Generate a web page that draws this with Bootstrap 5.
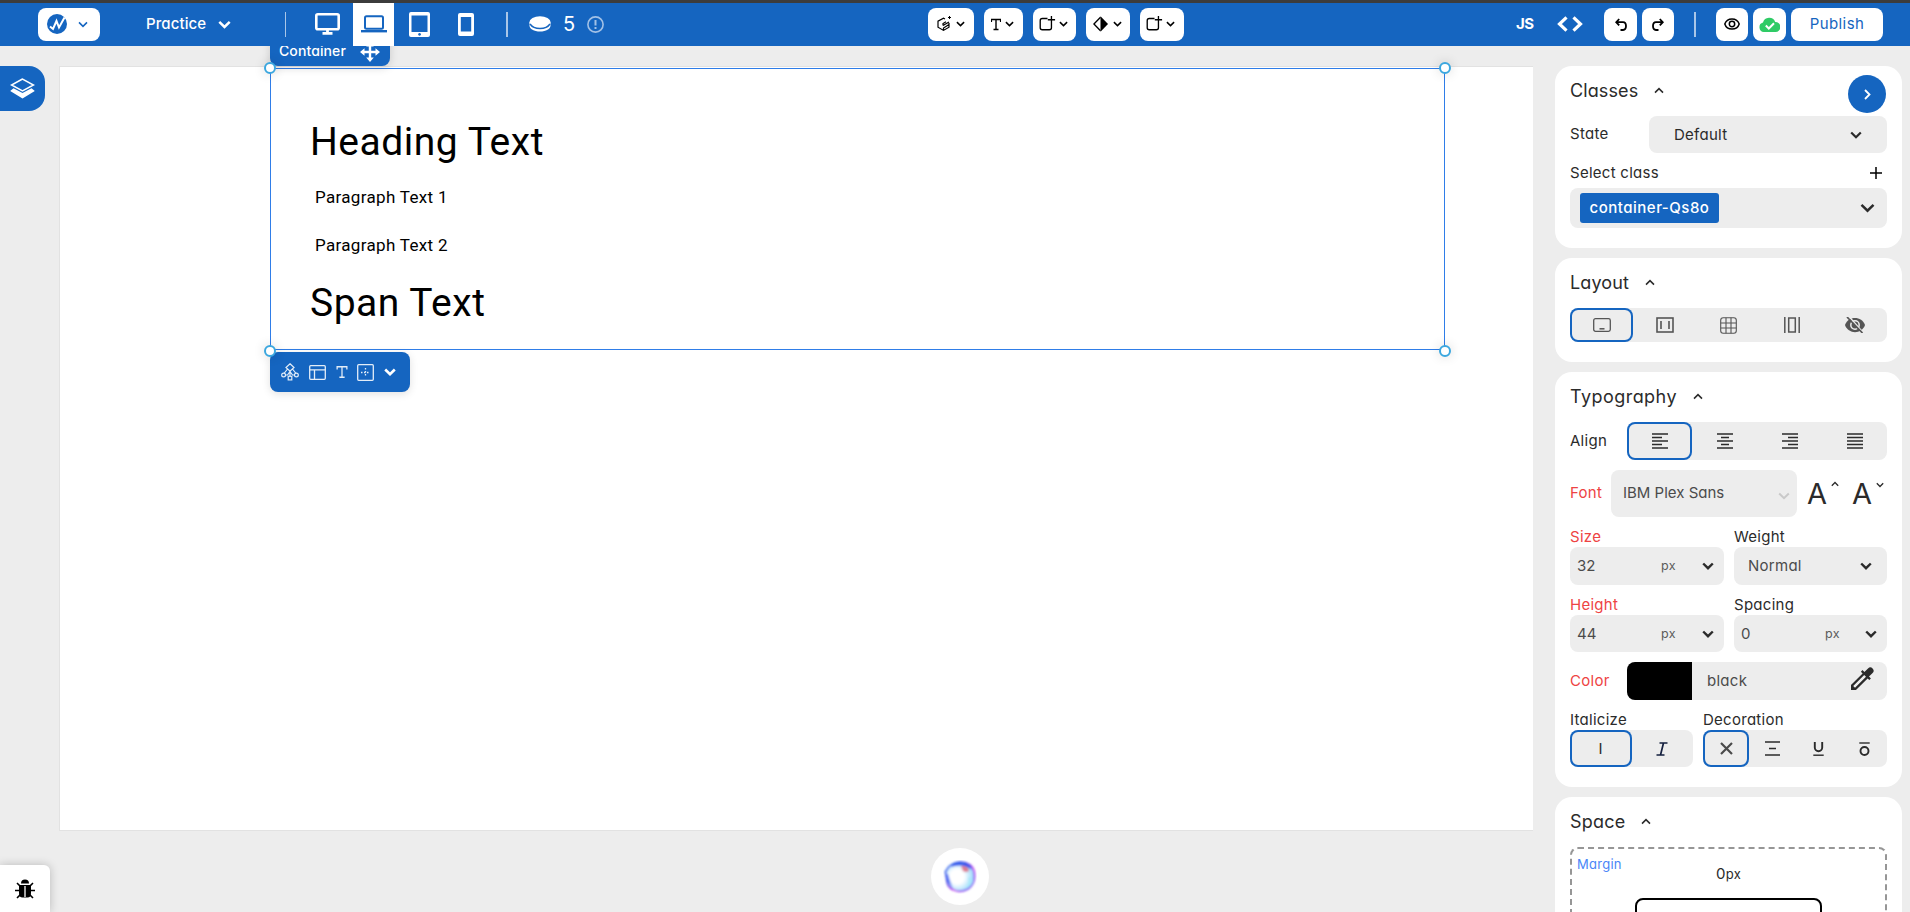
<!DOCTYPE html>
<html lang="en">
<head>
<meta charset="utf-8">
<title>Practice – Editor</title>
<link href="https://cdn.jsdelivr.net/npm/bootstrap@5.3.0/dist/css/bootstrap.min.css" rel="stylesheet">
<script src="https://cdn.jsdelivr.net/npm/bootstrap@5.3.0/dist/js/bootstrap.bundle.min.js"></script>
<style>
:root{--blue:#1565c0;--ink:#2b2b2b;--field:#ededed}
body{height:912px;overflow:hidden;background:#ededed;font-family:Inter,"Liberation Sans",sans-serif;font-feature-settings:"cv11" 1;font-size:15px;line-height:20px;color:var(--ink)}
svg{display:block;flex:none;fill:none}
svg:not([stroke]){stroke:currentColor}
.topbar{height:46px;border-top:3px solid #3c3c3c;padding-bottom:1px;background:var(--blue);position:relative;z-index:5;color:#fff}
.tool{height:33px;border-radius:8px;background:#fff;color:#000;flex:none}
.rule{width:2px;height:25px;background:#a9c6e8;flex:none}
.device-on{width:41px;height:43px;margin-bottom:-1px;padding-bottom:1px;background:#fff;color:var(--blue)}
.workspace{height:866px;margin-top:-20px;padding-top:20px;position:relative}
.rail{width:59px}
.layers{width:45px;height:45px;margin-top:20px;border-radius:0 16px 16px 0;background:var(--blue);color:#fff}
.sheet{width:1474px;height:765px;margin-top:20px;background:#fff;border:1px solid #e2e2e2;border-right:0;flex:none}
.picked{width:1175px;height:282px;margin:1px 0 0 210px;border:1px solid #2f7de8;padding:50px 0 0 39px;font-family:Roboto,"Noto Sans",sans-serif;color:#000}
.knob{position:absolute;width:12px;height:12px;border:2px solid #3ba7df;border-radius:50%;background:#fff;box-shadow:0 0 12px rgba(0,0,0,.16)}
.big{font-size:39px;line-height:46px;height:46px;font-weight:400;margin:0}
.para{font-size:17px;line-height:24px;height:24px;padding-left:5px;margin:0;font-weight:400;letter-spacing:.32px}
.tagbox{position:absolute;left:-1px;top:-32px;width:120px;height:29px;border-radius:0 0 8px 8px;background:var(--blue);color:#fff;font-family:Inter,sans-serif;font-size:14px;font-weight:500;letter-spacing:.1px;padding:1px 10px 0 9px;box-shadow:0 2px 8px rgba(0,0,0,.15)}
.quick{position:absolute;left:-1px;top:283px;width:140px;height:40px;border-radius:8px;background:var(--blue);color:#e3edf8;box-shadow:0 2px 8px rgba(0,0,0,.12);padding:0 14px 0 11px}
.side{width:347px;margin:20px 0 0 22px;letter-spacing:.27px}
.panel{background:#fff;border-radius:17px;padding:0 15px 20px;margin-bottom:10px;position:relative}
.head{height:50px;font-size:18px;letter-spacing:.1px;gap:16px}
.head svg{margin-top:-1px}
.field{background:var(--field);border-radius:8px;flex:none}
.lbl{height:20px;line-height:20px}
.changed{color:#ee4343}
.on{box-shadow:inset 0 0 0 2px var(--blue);border-radius:8px}
.seg>div{flex:1 1 0;height:100%}
.go{position:absolute;right:16px;top:9px;width:38px;height:38px;border-radius:50%;background:var(--blue);color:#fff}
.chip{width:139px;height:30px;border-radius:3px;background:var(--blue);color:#fff;font-weight:500;letter-spacing:.5px}
.val{color:#4b4b4b}
.unit{font-size:12.500px;color:#5b5b5b}
.bump{font-size:29px;line-height:30px;letter-spacing:0}
.margins{border:2px dashed #969696;border-radius:8px;height:160px;position:relative}
.inner{border:2px solid #000;border-radius:8px;width:187px;height:100px;margin:20px auto 0}
.bug{position:absolute;left:0;top:865px;width:50px;height:47px;background:#fff;border-radius:0 6px 0 0;color:#000;box-shadow:0 0 10px rgba(0,0,0,.22);padding-left:15px}
.orb{position:absolute;left:931px;top:848px;width:58px;height:57px;border-radius:50%;background:#fff}
</style>
</head>
<body>
<svg width="0" height="0" class="position-absolute">
  <symbol id="dn" viewBox="0 0 12 8"><path d="M1.2 1.5 6 6.2 10.8 1.5"/></symbol>
  <symbol id="up" viewBox="0 0 12 8"><path d="M1.2 6.5 6 1.8l4.800 4.700"/></symbol>
  <symbol id="boxplus" viewBox="0 0 28 26"><path d="M14 4H5.500Q2 4 2 7.500V19q0 3.500 3.500 3.500H17q3.500 0 3.500-3.500V12M20.500 0v12M14.500 6h12"/></symbol>
  <symbol id="tee" viewBox="0 0 16 18"><path d="M1.500 5.500V2h13v3.500M8 2v14M4.500 16h7"/></symbol>
</svg>

<header class="topbar d-flex align-items-center">
  <div class="tool d-flex align-items-center" style="width:62px;margin-left:38px;padding-left:9px;gap:11px">
    <svg width="20" height="20" viewBox="0 0 20 20" stroke="none"><circle cx="10" cy="10" r="10" fill="#1565c0"/><path d="M3 12.500 6 15l3.500-8 2.500 6.500 5.500-10" fill="none" stroke="#fff" stroke-width="2"/></svg>
    <svg width="10" height="7" stroke="#1565c0" stroke-width="1.900"><use href="#dn"/></svg>
  </div>
  <div style="width:72px;margin-left:46px;font-weight:500;letter-spacing:.1px">Practice</div>
  <svg width="13" height="9" stroke-width="2.300"><use href="#dn"/></svg>
  <div class="rule" style="width:1px;margin-left:54px"></div>
  <svg width="25" height="22" viewBox="0 0 25 22" style="margin-left:29px"><rect x="1.300" y="1.300" width="22.400" height="15" rx="1.500" stroke-width="2.600"/><path d="M12.500 16v3.500M7.500 20.300h10" stroke-width="2.800"/></svg>
  <div class="device-on d-flex align-items-center justify-content-center" style="margin-left:13px"><svg width="26" height="18" viewBox="0 0 26 18"><rect x="4" y="1.200" width="18" height="12.600" rx="1.500" stroke-width="2"/><path d="M0 16.200h26" stroke-width="2.400"/></svg></div>
  <svg width="21" height="25" viewBox="0 0 21 25" style="margin-left:15px" stroke="none"><path fill="#fff" fill-rule="evenodd" d="M2 0h17q2 0 2 2v21q0 2-2 2H2q-2 0-2-2V2Q0 0 2 0m.500 3.500V20h16V3.500zM10.500 21a1.400 1.400 0 1 0 .1 0"/></svg>
  <svg width="16" height="23" viewBox="0 0 16 23" style="margin-left:28px" stroke="none"><path fill="#fff" fill-rule="evenodd" d="M2 0h12q2 0 2 2v19q0 2-2 2H2q-2 0-2-2V2Q0 0 2 0m.800 4v14.500h10.400V4z"/></svg>
  <div class="rule" style="margin-left:32px"></div>
  <svg width="22" height="16" viewBox="0 0 22 16" style="margin-left:21px"><path d="M.5 7v2.500C.5 13 5 15.500 11 15.500S21.500 13 21.500 9.500V7" fill="#fff" stroke="none"/><ellipse cx="11" cy="6.300" rx="10.600" ry="6" fill="#fff" stroke="none"/><path d="M1 8c2 3 5 4.500 10 4.500S19 11 21 8" stroke="#1565c0" stroke-width="1.400"/></svg>
  <div style="width:24px;margin-left:12px;font-size:20px;font-weight:400">5</div>
  <svg width="17" height="17" viewBox="0 0 17 17" stroke="#a2c1e6" stroke-width="1.600"><circle cx="8.500" cy="8.500" r="7.600"/><path d="M8.500 4v5.500M8.500 11v2" stroke-width="2"/></svg>

  <div class="tool d-flex align-items-center" style="width:46px;margin-left:324px;padding-left:9px;gap:5px">
    <svg width="14" height="16" viewBox="0 0 14 16" stroke-width="1.200"><path d="M8 3 6.500 2.200 1 5.200v6L6.500 14.400 12 11.200V7M6.500 14.500V12L12 8.500M6 9.500l6-3.500M6 9.500v-2l3-1.800"/><path d="M12.500 0v3M11 1.500h3" stroke-width="1"/></svg><svg width="9" height="6" stroke-width="2"><use href="#dn"/></svg></div>
  <div class="tool d-flex align-items-center" style="width:39px;margin-left:10px;padding-left:7px;gap:4px"><svg width="10" height="13" stroke-width="2" viewBox="1 0 14 18"><use href="#tee" width="16" height="18"/></svg><svg width="9" height="6" stroke-width="2"><use href="#dn"/></svg></div>
  <div class="tool d-flex align-items-center" style="width:43px;margin-left:10px;padding-left:6px;gap:3px"><svg width="17" height="16" stroke-width="2.200"><use href="#boxplus"/></svg><svg width="9" height="6" stroke-width="2"><use href="#dn"/></svg></div>
  <div class="tool d-flex align-items-center" style="width:44px;margin-left:10px;padding-left:7px;gap:5px"><svg width="15" height="16" viewBox="0 0 15 16"><path d="M7.500 1.200.9 8l6.600 6.800" stroke-width="1.400"/><path d="M7.500.2 15 8l-7.500 7.800z" fill="#000" stroke="none"/></svg><svg width="9" height="6" stroke-width="2"><use href="#dn"/></svg></div>
  <div class="tool d-flex align-items-center" style="width:44px;margin-left:10px;padding-left:6px;gap:3px"><svg width="17" height="16" stroke-width="2.200"><use href="#boxplus"/></svg><svg width="9" height="6" stroke-width="2"><use href="#dn"/></svg></div>

  <div class="fw-bold" style="width:41px;margin-left:332px;letter-spacing:-.5px">JS</div>
  <svg width="26" height="16" viewBox="0 0 26 16" stroke-width="3.200"><path d="M9.500 1.300 2.500 8l7 6.700M16.500 1.300l7 6.700-7 6.700"/></svg>
  <div class="tool d-flex align-items-center justify-content-center" style="width:33px;margin-left:21px"><svg width="12" height="13" viewBox="0 0 12 13" stroke-width="1.800"><path d="M4.200 1 1.200 4.200l3 3.200M1.500 4.200H8q3 0 3 3.800T8 12H5.500"/></svg></div>
  <div class="tool d-flex align-items-center justify-content-center" style="width:32px;margin-left:5px"><svg width="12" height="13" viewBox="0 0 12 13" stroke-width="1.800"><path d="m7.800 1 3 3.200-3 3.200M10.500 4.200H4Q1 4.200 1 8t3 4h2.500"/></svg></div>
  <div class="rule" style="margin-left:20px"></div>
  <div class="tool d-flex align-items-center justify-content-center" style="width:32px;margin-left:20px"><svg width="16" height="12" viewBox="0 0 16 12" stroke-width="1.500"><path d="M.8 6C3-.8 13-.8 15.200 6 13 12.800 3 12.800.8 6z"/><circle cx="8" cy="6" r="2.700"/></svg></div>
  <div class="tool d-flex align-items-center justify-content-center" style="width:33px;margin-left:5px"><svg width="21" height="15" viewBox="0 0 21 15" stroke="none"><path fill="#2fcb66" d="M4.800 15a4.800 4.800 0 0 1-.8-9.400A6.400 6.400 0 0 1 16.200 5a5 5 0 0 1 .3 10z"/><path d="m6.800 8.500 3 3 5.200-5.300" stroke="#fff" stroke-width="2"/></svg></div>
  <div class="tool d-flex align-items-center justify-content-center" style="width:92px;margin-left:5px;color:var(--blue);letter-spacing:.4px">Publish</div>
</header>

<main class="workspace d-flex align-items-start overflow-hidden" style="height:886px">
  <div class="rail flex-shrink-0">
    <div class="layers d-flex align-items-center" style="padding-left:10px"><svg width="25" height="21" viewBox="0 0 25 21"><path d="M12.500 1 1.500 7l11 6 11-6z" stroke-width="1.500"/><path d="M3.500 10.200 12.500 15l9-4.800 3.300 2.800L12.500 20.500.2 13z" fill="#fff" stroke="none"/></svg></div>
  </div>

  <section class="sheet">
    <div class="picked position-relative">
      <h1 class="big" style="letter-spacing:.52px">Heading Text</h1>
      <p class="para" style="margin-top:20px">Paragraph Text 1</p>
      <p class="para" style="margin-top:24px">Paragraph Text 2</p>
      <span class="big d-block" style="margin-top:23px;letter-spacing:.5px">Span Text</span>
      <div class="tagbox d-flex justify-content-between"><span style="margin-top:3px">Container</span>
        <svg width="20" height="20" viewBox="0 0 20 20" fill="#fff" style="margin-top:4px"><path d="M10 3v14M3 10h14" stroke-width="2.400"/><path fill="#fff" stroke="none" d="m10 0 3.800 4.500H6.200zM10 20l3.800-4.500H6.200zM0 10l4.500-3.800v7.600zM20 10l-4.500-3.800v7.600z"/></svg></div>
      <div class="quick d-flex align-items-center justify-content-between">
        <svg width="18" height="18" viewBox="0 0 18 18" stroke-width="1.200"><path d="m9 .8 4 3.700-4 3.700-4-3.700zM9 8.200v5M6.500 6 3 10.500M11.500 6l3.500 4.500M4.500 12h2l2.500-3.500 2.500 3.500h2"/><circle cx="2.600" cy="12" r="1.900"/><circle cx="15.400" cy="12" r="1.900"/><rect x="7.200" y="13.300" width="3.600" height="3.600"/></svg>
        <svg width="17" height="15" viewBox="0 0 17 15" stroke-width="1.300"><rect x=".7" y=".7" width="15.600" height="13.600" rx="1"/><path d="M.7 4.800h15.600M5.500 4.800v9.500"/></svg>
        <svg width="12" height="14" stroke-width="1.700"><use href="#tee"/></svg>
        <svg width="17" height="17" viewBox="0 0 17 17" stroke-width="1.300"><rect x=".7" y=".7" width="15.600" height="15.600" rx="1"/><path d="M8.500 4v9M4 8.500h9" stroke-dasharray="1.500 1.500"/></svg>
        <svg width="12" height="8" stroke="#fff" stroke-width="2.600"><use href="#dn"/></svg>
      </div>
      <i class="knob" style="left:-7px;top:-7px"></i><i class="knob" style="right:-7px;top:-7px"></i>
      <i class="knob" style="left:-7px;bottom:-8px"></i><i class="knob" style="right:-7px;bottom:-8px"></i>
    </div>
  </section>

  <aside class="side flex-shrink-0">
    <section class="panel">
      <div class="head d-flex align-items-center">Classes <svg width="10" height="7" stroke-width="1.900"><use href="#up"/></svg></div>
      <div class="go d-flex align-items-center justify-content-center"><svg width="7" height="11" viewBox="0 0 7 11" stroke-width="1.800"><path d="m1 1 4.500 4.500L1 10"/></svg></div>
      <div class="d-flex align-items-center justify-content-between"><span style="margin-top:-1px">State</span>
        <div class="field d-flex align-items-center justify-content-between" style="width:238px;height:37px;padding:0 25px">Default<svg width="12" height="8" stroke-width="2.200"><use href="#dn"/></svg></div></div>
      <div class="lbl d-flex align-items-center justify-content-between" style="margin:10px 5px 5px 0">Select class<svg width="12" height="12" viewBox="0 0 12 12" stroke="#000" stroke-width="1.500"><path d="M6 0v12M0 6h12"/></svg></div>
      <div class="field d-flex align-items-center justify-content-between" style="height:40px;padding:0 12px 0 10px"><div class="chip d-flex align-items-center justify-content-center">container-Qs8o</div><svg width="15" height="10" stroke-width="2"><use href="#dn"/></svg></div>
    </section>

    <section class="panel">
      <div class="head d-flex align-items-center">Layout <svg width="10" height="7" stroke-width="1.900"><use href="#up"/></svg></div>
      <div class="field seg d-flex" style="height:34px;color:#555">
        <div class="on d-flex align-items-center justify-content-center"><svg width="18" height="14" viewBox="0 0 18 14" stroke-width="1.300"><rect x=".7" y=".7" width="16.600" height="12.600" rx="1.800"/><path d="M6.500 10.800h5" stroke-width="1.500"/></svg></div>
        <div class="d-flex align-items-center justify-content-center"><svg width="18" height="16" viewBox="0 0 18 16" stroke-width="1.600"><rect x="1" y="1" width="16" height="14"/><path d="M5 4v8M13 4v8"/></svg></div>
        <div class="d-flex align-items-center justify-content-center"><svg width="17" height="17" viewBox="0 0 17 17" stroke-width="1.100"><rect x=".7" y=".7" width="15.600" height="15.600" rx="2.500"/><path d="M6 .7v15.600M11 .7v15.600M.7 6h15.600M.7 11h15.600"/></svg></div>
        <div class="d-flex align-items-center justify-content-center"><svg width="16" height="16" viewBox="0 0 16 16" stroke-width="1.500"><path d="M.8 0v16M15.200 0v16"/><rect x="4.700" y="1" width="6.600" height="14"/></svg></div>
        <div class="d-flex align-items-center justify-content-center"><svg width="20" height="16" viewBox="0 0 20 16"><path d="M0 8C3-1.500 17-1.500 20 8 17 17.500 3 17.500 0 8z" fill="#555" stroke="none"/><circle cx="10" cy="8" r="4.200" stroke="#ededed" stroke-width="1.500"/><path d="m3.500-1 15 17" stroke="#ededed" stroke-width="1.500"/><path d="m2 0 15.500 16" stroke-width="1.700"/></svg></div>
      </div>
    </section>

    <section class="panel">
      <div class="head d-flex align-items-center" style="letter-spacing:.45px">Typography <svg width="10" height="7" stroke-width="1.900"><use href="#up"/></svg></div>
      <div class="d-flex align-items-center justify-content-between">Align
        <div class="field seg d-flex" style="width:260px;height:38px">
          <div class="on d-flex align-items-center justify-content-center"><svg width="16" height="16" viewBox="0 0 16 16" stroke-width="1.500"><path d="M0 1h16M0 4.500h10M0 8h16M0 11.500h10M0 15h16"/></svg></div>
          <div class="d-flex align-items-center justify-content-center"><svg width="16" height="16" viewBox="0 0 16 16" stroke-width="1.500"><path d="M0 1h16M4 4.500h8M0 8h16M4 11.500h8M0 15h16"/></svg></div>
          <div class="d-flex align-items-center justify-content-center"><svg width="16" height="16" viewBox="0 0 16 16" stroke-width="1.500"><path d="M0 1h16M6 4.500h10M0 8h16M6 11.500h10M0 15h16"/></svg></div>
          <div class="d-flex align-items-center justify-content-center"><svg width="16" height="16" viewBox="0 0 16 16" stroke-width="1.500"><path d="M0 1h16M0 4.500h16M0 8h16M0 11.500h16M0 15h16"/></svg></div>
        </div></div>
      <div class="d-flex align-items-center" style="margin-top:10px"><span class="changed" style="width:41px;margin-top:-1px">Font</span>
        <div class="field val d-flex align-items-center justify-content-between" style="width:186px;height:47px;padding:0 7px 0 12px;letter-spacing:0"><span style="margin-top:-1px">IBM Plex Sans</span><svg width="12" height="8" stroke="#c9c9c9" stroke-width="2" style="margin-top:5px"><use href="#dn"/></svg></div>
        <div class="bump d-flex" style="margin-left:10px;gap:4px">A<svg width="8" height="6" stroke-width="2" style="margin-top:2px"><use href="#up"/></svg></div>
        <div class="bump d-flex" style="margin-left:13px;gap:4px">A<svg width="8" height="6" stroke-width="2" style="margin-top:3px"><use href="#dn"/></svg></div>
      </div>
      <div class="d-flex" style="margin-top:10px;gap:10px">
        <div style="width:154px"><div class="lbl changed">Size</div><div class="field val d-flex align-items-center" style="height:38px;padding:0 10px 0 7px"><span class="flex-grow-1" style="letter-spacing:0">32</span><span class="unit" style="width:41px">px</span><svg width="12" height="8" stroke="#2b2b2b" stroke-width="2.400"><use href="#dn"/></svg></div></div>
        <div style="width:153px"><div class="lbl">Weight</div><div class="field val d-flex align-items-center justify-content-between" style="height:38px;padding:0 15px 0 14px">Normal<svg width="12" height="8" stroke="#2b2b2b" stroke-width="2.400"><use href="#dn"/></svg></div></div>
      </div>
      <div class="d-flex" style="margin-top:10px;gap:10px">
        <div style="width:154px"><div class="lbl changed">Height</div><div class="field val d-flex align-items-center" style="height:37px;padding:0 10px 0 7px"><span class="flex-grow-1" style="letter-spacing:0">44</span><span class="unit" style="width:41px">px</span><svg width="12" height="8" stroke="#2b2b2b" stroke-width="2.400"><use href="#dn"/></svg></div></div>
        <div style="width:153px"><div class="lbl">Spacing</div><div class="field val d-flex align-items-center" style="height:37px;padding:0 10px 0 7px"><span class="flex-grow-1">0</span><span class="unit" style="width:40px">px</span><svg width="12" height="8" stroke="#2b2b2b" stroke-width="2.400"><use href="#dn"/></svg></div></div>
      </div>
      <div class="d-flex align-items-center justify-content-between" style="margin-top:10px"><span class="changed">Color</span>
        <div class="field val d-flex align-items-center overflow-hidden" style="width:260px;height:38px;padding-right:13px"><div class="bg-black h-100" style="width:65px;margin-right:15px"></div><span class="flex-grow-1">black</span>
          <svg width="24" height="24" viewBox="0 0 24 24" stroke="none" style="margin-top:-4px"><path fill="#2b2b2b" fill-rule="evenodd" d="M22.600 1.400a3.300 3.300 0 0 0-4.600 0l-3.600 3.600-1.900-1.900-1.600 1.600 1.700 1.700L1 18v5h5L17.600 11.400l1.700 1.700 1.600-1.600-1.900-1.900 3.600-3.600a3.300 3.300 0 0 0 0-4.600zM5 20.800 3.200 19l11-11 1.800 1.800z"/></svg></div></div>
      <div class="d-flex" style="margin-top:10px;gap:10px">
        <div style="width:123px"><div class="lbl">Italicize</div><div class="field seg d-flex" style="height:37px">
          <div class="on d-flex align-items-center justify-content-center">I</div>
          <div class="d-flex align-items-center justify-content-center"><svg width="12" height="14" viewBox="0 0 12 14" stroke="#15203f" stroke-width="1.700"><path d="M3.500 1h8M.5 13h8M7.500 1l-3 12"/></svg></div></div></div>
        <div style="width:184px"><div class="lbl">Decoration</div><div class="field seg d-flex" style="height:37px">
          <div class="on d-flex align-items-center justify-content-center"><svg width="13" height="13" viewBox="0 0 13 13" stroke="#4b4b4b" stroke-width="2.200"><path d="m1 1 11 11M12 1 1 12"/></svg></div>
          <div class="d-flex align-items-center justify-content-center"><svg width="15" height="15" viewBox="0 0 15 15" stroke-width="1.500"><path d="M0 1h15M0 14h15M4 7.500h7"/></svg></div>
          <div class="d-flex align-items-center justify-content-center"><svg width="11" height="14" viewBox="0 0 11 14" stroke-width="1.900"><path d="M1.800 0v5.500a3.700 3.700 0 0 0 7.400 0V0"/><path d="M.3 13.200h10.400" stroke-width="1.400"/></svg></div>
          <div class="d-flex align-items-center justify-content-center"><svg width="11" height="14" viewBox="0 0 11 14" stroke-width="1.900"><circle cx="5.500" cy="9" r="4"/><path d="M.3 1h10.400" stroke-width="1.400"/></svg></div></div></div>
      </div>
    </section>

    <section class="panel">
      <div class="head d-flex align-items-center" style="letter-spacing:.2px">Space <svg width="10" height="7" stroke-width="1.900"><use href="#up"/></svg></div>
      <div class="margins"><div style="position:absolute;left:5px;top:5px;font-size:13px;color:#4a86f7">Margin</div>
        <div class="text-center" style="padding-top:14px;height:29px;line-height:22px">0<span style="font-size:13px">px</span></div>
        <div class="inner"></div></div>
    </section>
  </aside>
</main>

<div class="bug d-flex align-items-center"><svg width="20" height="20" viewBox="0 0 20 20" stroke-width="1.600"><path d="M5.500 7.500 2 4M14.500 7.500 18 4M5 11.500H0M15 11.500h5M5.500 15.500 2 19M14.500 15.500l3.500 3.500"/><path d="M6 4.500a4 4 0 0 1 8 0zM4 6h12v8q0 4.500-3.500 4.500h-5Q4 18.500 4 14z" fill="#000" stroke="none"/><path d="M10 7v11" stroke="#ddd" stroke-width="1.500"/></svg></div>
<div class="orb d-flex align-items-center justify-content-center">
  <svg width="34" height="34" viewBox="0 0 34 34" stroke="none">
    <defs><linearGradient id="rim" x1="0" y1="0" x2="1" y2="1"><stop offset="0" stop-color="#2a7df0"/><stop offset=".35" stop-color="#3b3fe8"/><stop offset=".6" stop-color="#c63df0"/><stop offset="1" stop-color="#5a5cf5"/></linearGradient>
    <radialGradient id="core" cx=".4" cy=".5" r=".6"><stop offset=".4" stop-color="#fff"/><stop offset="1" stop-color="#8fd6fb"/></radialGradient>
    <filter id="soft"><feGaussianBlur stdDeviation=".8"/></filter></defs>
    <g filter="url(#soft)"><path d="M12 3Q20 .5 27 5q5 4 4.500 12T25 29q-7 4-14 1-6-2-7-9T2.500 12Q6 5 12 3z" fill="url(#core)" stroke="url(#rim)" stroke-width="1.800"/><path d="M10 4q10-3 17 2l2 4q-5-4-11-4.500T8 7z" fill="#2c55ea"/><path d="M18 6q8 0 8 5-3 2-6 0-1-2-2-5z" fill="#e0566f" opacity=".75"/><path d="m3 14 2 8 5 7q-3-8-5-15z" fill="#4468f2" opacity=".8"/><path d="M25 17q5 1 5 4-2 6-8 8 5-6 3-12z" fill="#a7e8fa"/></g>
  </svg></div>
</body>
</html>
